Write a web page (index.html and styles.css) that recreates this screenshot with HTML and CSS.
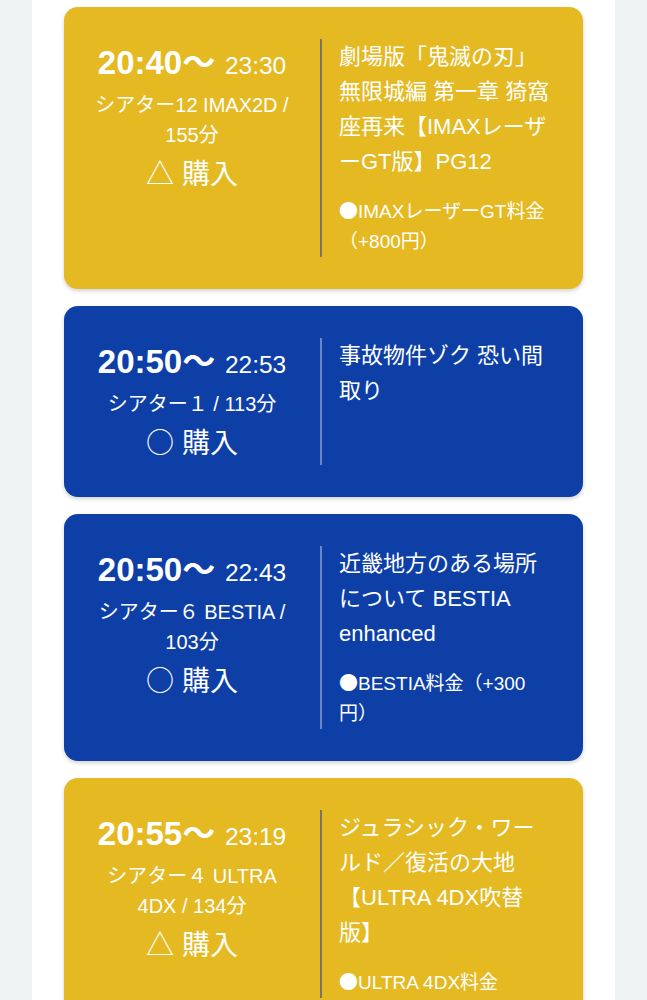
FILE: index.html
```html
<!DOCTYPE html>
<html lang="ja">
<head>
<meta charset="utf-8">
<title>上映スケジュール</title>
<link rel="stylesheet" href="styles.css">
</head>
<body>
<main class="page">
  <ul class="schedule">
    <li class="show show--few">
      <div class="show-time">
        <p class="time"><span class="start">20:40<span class="cjk">〜</span></span> <span class="end">23:30</span></p>
        <p class="screen">シアター12 IMAX2D /<br>155分</p>
        <p class="buy"><span class="cjk">△</span> 購入</p>
      </div>
      <div class="show-info">
        <p class="title">劇場版「鬼滅の刃」<br>無限城編 第一章 猗窩<br>座再来【IMAXレーザ<br>ーGT版】PG12</p>
        <p class="note"><span class="cjk">●</span>IMAXレーザーGT料金<br>（+800円）</p>
      </div>
    </li>
    <li class="show show--open">
      <div class="show-time">
        <p class="time"><span class="start">20:50<span class="cjk">〜</span></span> <span class="end">22:53</span></p>
        <p class="screen">シアター１ / 113分</p>
        <p class="buy"><span class="cjk">○</span> 購入</p>
      </div>
      <div class="show-info">
        <p class="title">事故物件ゾク 恐い間<br>取り</p>
      </div>
    </li>
    <li class="show show--open">
      <div class="show-time">
        <p class="time"><span class="start">20:50<span class="cjk">〜</span></span> <span class="end">22:43</span></p>
        <p class="screen">シアター６ BESTIA /<br>103分</p>
        <p class="buy"><span class="cjk">○</span> 購入</p>
      </div>
      <div class="show-info">
        <p class="title">近畿地方のある場所<br>について BESTIA<br>enhanced</p>
        <p class="note"><span class="cjk">●</span>BESTIA料金（+300<br>円）</p>
      </div>
    </li>
    <li class="show show--few">
      <div class="show-time">
        <p class="time"><span class="start">20:55<span class="cjk">〜</span></span> <span class="end">23:19</span></p>
        <p class="screen">シアター４ ULTRA<br>4DX / 134分</p>
        <p class="buy"><span class="cjk">△</span> 購入</p>
      </div>
      <div class="show-info">
        <p class="title">ジュラシック・ワー<br>ルド／復活の大地<br>【ULTRA 4DX吹替<br>版】</p>
        <p class="note"><span class="cjk">●</span>ULTRA 4DX料金</p>
      </div>
    </li>
  </ul>
</main>
</body>
</html>
```
FILE: styles.css
```css
* {
  box-sizing: border-box;
}

html, body {
  margin: 0;
  padding: 0;
}

body {
  background: #eef3f4;
  font-family: "Liberation Sans", "Noto Sans CJK JP", sans-serif;
  color: #ffffff;
}

.page {
  background: #ffffff;
  margin: 0 32px;
  padding: 7px 32px 0;
  min-height: 1000px;
}

.schedule {
  list-style: none;
  margin: 0;
  padding: 0;
  display: flex;
  flex-direction: column;
  gap: 17px;
}

.show {
  display: grid;
  grid-template-columns: 256px 1fr;
  padding: 32px 8px 32px 0;
  border-radius: 14px;
  box-shadow: 0 2px 4px rgba(0, 0, 0, 0.18);
}

.show--few {
  background: #e4b921;
}

.show--open {
  background: #0d3fa7;
}

.show p {
  margin: 0;
}

.cjk {
  font-family: "Noto Sans CJK JP", sans-serif;
  line-height: 1;
}

.show-time {
  text-align: center;
  padding-top: 3px;
}

.time {
  font-size: 24px;
  line-height: 44px;
  height: 44px;
  white-space: nowrap;
}

.start {
  font-size: 33px;
  font-weight: 700;
  line-height: 1;
  margin-right: 3px;
  vertical-align: -2px;
}

.end {
  font-size: 24.5px;
  line-height: 1;
  vertical-align: -2px;
}

.screen {
  margin-top: 4px !important;
  font-size: 20px;
  line-height: 30px;
}

.buy {
  margin-top: 3px !important;
  font-size: 28px;
  line-height: 43px;
  height: 43px;
}

.show-info {
  border-left: 2px solid #7a7566;
  padding-left: 17px;
}

.show--open .show-info {
  border-left-color: #6b84c6;
}

.title {
  font-size: 22px;
  line-height: 35px;
  white-space: nowrap;
}

.note {
  margin-top: 18px !important;
  font-size: 19px;
  line-height: 30px;
  white-space: nowrap;
}
```
